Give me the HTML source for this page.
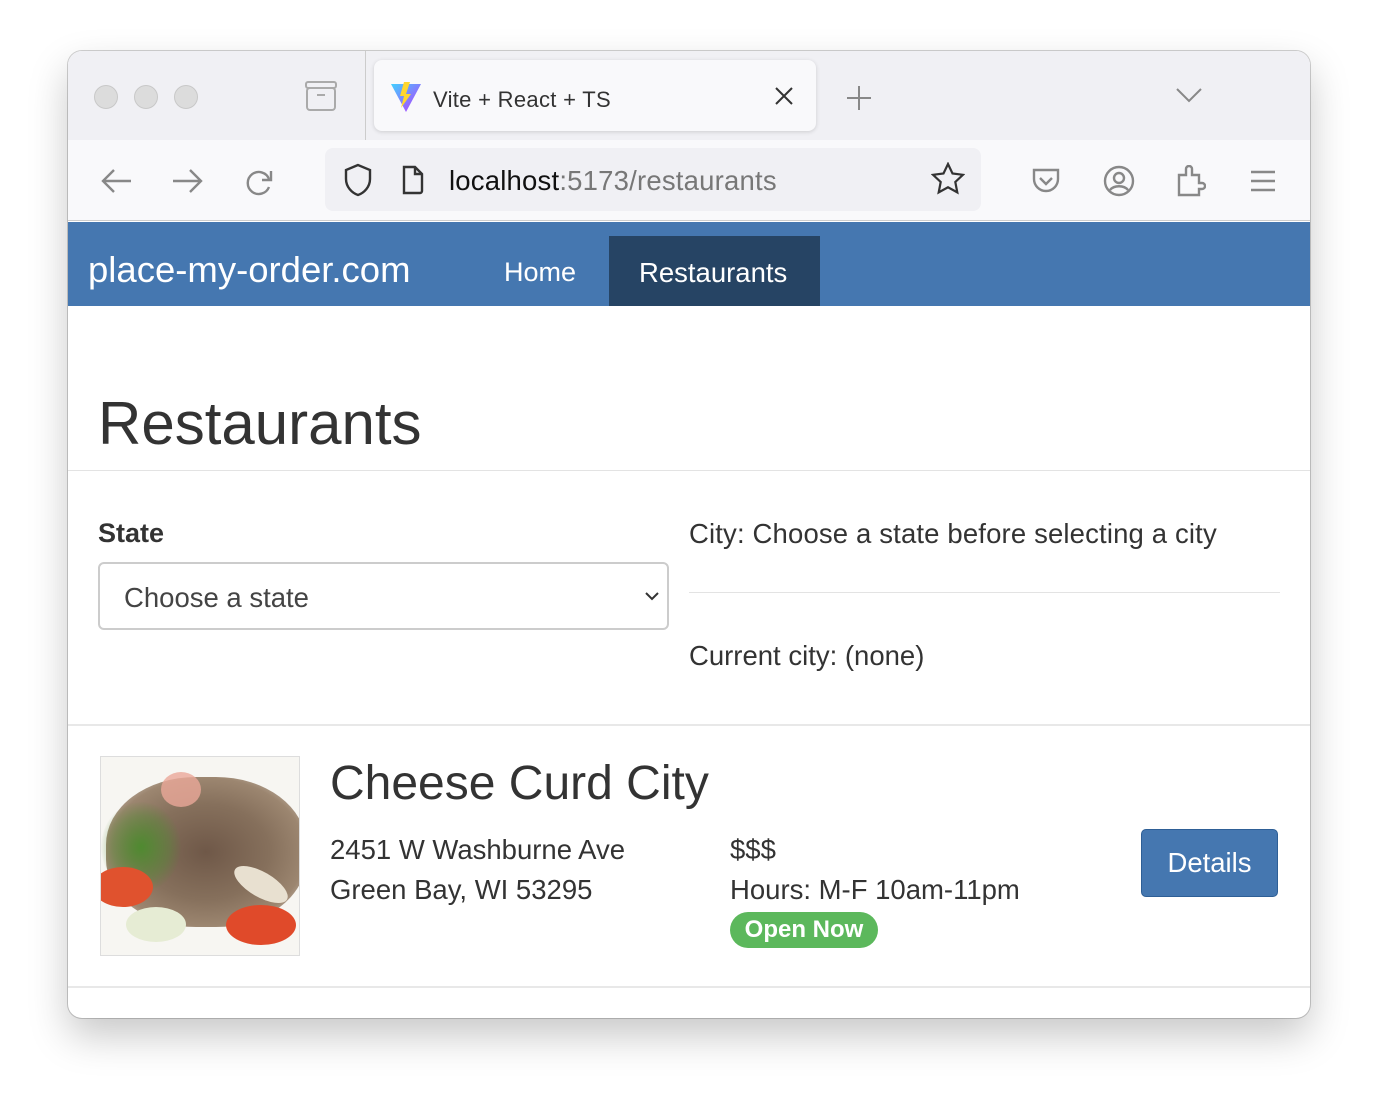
<!DOCTYPE html>
<html><head><meta charset="utf-8"><style>
*{margin:0;padding:0;box-sizing:border-box}
body{width:1378px;height:1102px;background:#fff;font-family:"Liberation Sans",Arial,sans-serif;position:relative;overflow:hidden}
.win{position:absolute;left:68px;top:51px;width:1242px;height:967px;border-radius:14px;overflow:hidden;background:#fff;box-shadow:0 18px 40px rgba(0,0,0,.22),0 0 0 1px rgba(0,0,0,.18)}
.tabs{position:absolute;left:0;top:0;width:100%;height:89px;background:#f0f0f4}
.dot{position:absolute;top:34px;width:24px;height:24px;border-radius:50%;background:#dcdcdc;border:1px solid #c8c8c8}
.tab{position:absolute;left:306px;top:9px;width:442px;height:71px;background:#f9f9fb;border-radius:8px;box-shadow:0 1px 4px rgba(0,0,0,.15)}
.tb{position:absolute;left:0;top:89px;width:100%;height:81px;background:#f9f9fb;border-bottom:1px solid #ccc}
.url{position:absolute;left:257px;top:8px;width:656px;height:63px;background:#f0f0f4;border-radius:8px}
.nav{position:absolute;left:0;top:171px;width:100%;height:84px;background:#4577b0}
.abs{position:absolute}
.t{color:#333}
</style></head><body>
<div class="win">
 <div class="tabs">
  <div class="dot" style="left:26px"></div><div class="dot" style="left:66px"></div><div class="dot" style="left:106px"></div>
  <svg class="abs" style="left:236px;top:28px" width="34" height="34" viewBox="0 0 34 34" fill="none" stroke="#aaa" stroke-width="2"><rect x="2" y="3" width="30" height="6" rx="2"/><rect x="3" y="9" width="28" height="22" rx="3"/><path d="M13 16h8"/></svg>
  <div class="abs" style="left:297px;top:0;width:1px;height:89px;background:#ccc"></div>
  <div class="tab">
   <svg class="abs" style="left:15px;top:20px" width="34" height="34" viewBox="0 0 34 34"><defs><linearGradient id="g" x1="0" y1="0" x2="1" y2="1"><stop offset="0" stop-color="#41d1ff"/><stop offset="1" stop-color="#bd34fe"/></linearGradient></defs><path d="M2 4 L32 4 L17 32Z" fill="url(#g)"/><path d="M15 2 L21 2 L17 14 L22 14 L12 28 L15 16 L11 16Z" fill="#ffd62e"/></svg>
   <div class="abs" style="left:59px;top:27px;font-size:22px;color:#333;letter-spacing:.3px">Vite + React + TS</div>
   <svg class="abs" style="left:400px;top:26px" width="20" height="20" stroke="#333" stroke-width="2"><path d="M2 2L18 18M18 2L2 18"/></svg>
  </div>
  <svg class="abs" style="left:778px;top:34px" width="26" height="26" stroke="#888" stroke-width="2"><path d="M13 1v24M1 13h24"/></svg>
  <svg class="abs" style="left:1108px;top:36px" width="26" height="16" fill="none" stroke="#888" stroke-width="2"><path d="M1 2l12 12 12-12"/></svg>
 </div>
 <div class="tb">
  <svg class="abs" style="left:32px;top:28px" width="32" height="26" fill="none" stroke="#888" stroke-width="2.4"><path d="M31 13H3M14 2L3 13l11 11"/></svg>
  <svg class="abs" style="left:104px;top:28px" width="32" height="26" fill="none" stroke="#888" stroke-width="2.4"><path d="M1 13h28M18 2l11 11-11 11"/></svg>
  <svg class="abs" style="left:176px;top:27px" width="30" height="30" fill="none" stroke="#888" stroke-width="2.4"><path d="M25 12A11 11 0 1 0 25 20"/><path d="M27 4v9h-9" /></svg>
  <div class="url">
   <svg class="abs" style="left:18px;top:15px" width="30" height="34" fill="none" stroke="#333" stroke-width="2.4"><path d="M15 2L3 7v9c0 8 6 14 12 16 6-2 12-8 12-16V7z"/></svg>
   <svg class="abs" style="left:76px;top:17px" width="24" height="30" fill="none" stroke="#333" stroke-width="2.4"><path d="M3 2h11l7 7v17a2 2 0 0 1-2 2H3z"/><path d="M14 2v7h7"/></svg>
   <div class="abs" style="left:124px;top:17px;font-size:27.5px;color:#111;letter-spacing:.2px">localhost<span style="color:#777">:5173/restaurants</span></div>
   <svg class="abs" style="left:606px;top:14px" width="34" height="34" fill="none" stroke="#333" stroke-width="2.2"><path d="M17 2l4.5 9.5 10.5 1.3-7.7 7.2 2 10.4L17 25.3 7.7 30.4l2-10.4L2 12.8l10.5-1.3z"/></svg>
  </div>
  <svg class="abs" style="left:963px;top:26px" width="30" height="30" fill="none" stroke="#888" stroke-width="2.4"><path d="M3 4h24v9a12 12 0 0 1-24 0z"/><path d="M9 12l6 6 6-6"/></svg>
  <svg class="abs" style="left:1035px;top:25px" width="32" height="32" fill="none" stroke="#888" stroke-width="2.4"><circle cx="16" cy="16" r="14"/><circle cx="16" cy="13" r="5"/><path d="M7 25c4-5 14-5 18 0"/></svg>
  <svg class="abs" style="left:1108px;top:25px" width="30" height="32" fill="none" stroke="#888" stroke-width="2.4"><path d="M3 10h7V4a3 3 0 0 1 6 0v6h7v8h3a3 3 0 0 1 0 6h-3v6H3z"/></svg>
  <svg class="abs" style="left:1182px;top:30px" width="26" height="22" stroke="#888" stroke-width="2.4"><path d="M1 2h24M1 11h24M1 20h24"/></svg>
 </div>
 <div class="nav">
  <div class="abs" style="left:20px;top:27px;font-size:36.5px;color:#fff">place-my-order.com</div>
  <div class="abs" style="left:436px;top:35px;font-size:27px;color:#fff">Home</div>
  <div class="abs" style="left:541px;top:14px;width:211px;height:70px;background:#264464"></div>
  <div class="abs" style="left:571px;top:35px;font-size:27.5px;color:#fff">Restaurants</div>
 </div>
 <div class="abs t" style="left:30px;top:338px;font-size:60px">Restaurants</div>
 <div class="abs" style="left:0;top:419px;width:100%;height:1px;background:#e3e3e3"></div>
 <div class="abs t" style="left:30px;top:467px;font-size:27px;font-weight:bold">State</div>
 <div class="abs" style="left:30px;top:511px;width:571px;height:68px;border:2px solid #ccc;border-radius:6px"></div>
 <div class="abs" style="left:56px;top:531px;font-size:27.5px;color:#444">Choose a state</div>
 <svg class="abs" style="left:577px;top:540px" width="14" height="10" fill="none" stroke="#333" stroke-width="2"><path d="M1 2l6 6 6-6"/></svg>
 <div class="abs t" style="left:621px;top:467px;font-size:27.5px;letter-spacing:.15px">City: Choose a state before selecting a city</div>
 <div class="abs" style="left:621px;top:541px;width:591px;height:1px;background:#e3e3e3"></div>
 <div class="abs t" style="left:621px;top:589px;font-size:27.5px">Current city: (none)</div>
 <div class="abs" style="left:0;top:673px;width:100%;height:2px;background:#e8e8e8"></div>
 <div class="abs" style="left:32px;top:705px;width:200px;height:200px;border:1px solid #ddd;background:#f7f6f2;overflow:hidden">
  <div class="abs" style="left:5px;top:20px;width:200px;height:150px;border-radius:45%;background:radial-gradient(ellipse,#6f5848 0%,#86705c 45%,#9c8670 70%,rgba(220,210,195,0) 100%)"></div>
  <div class="abs" style="left:0;top:45px;width:80px;height:90px;border-radius:50%;background:radial-gradient(#4f8a30,rgba(80,140,50,.4) 50%,rgba(80,140,50,0) 72%)"></div>
  <div class="abs" style="left:-8px;top:110px;width:60px;height:40px;border-radius:50%;background:#e0522e"></div>
  <div class="abs" style="left:125px;top:148px;width:70px;height:40px;border-radius:50%;background:#e04a2a"></div>
  <div class="abs" style="left:25px;top:150px;width:60px;height:35px;border-radius:50%;background:#e6ecd4"></div>
  <div class="abs" style="left:60px;top:15px;width:40px;height:35px;border-radius:50%;background:#eaa898;opacity:.8"></div>
  <div class="abs" style="left:130px;top:115px;width:60px;height:25px;border-radius:50%;background:#e8e0d0;transform:rotate(30deg)"></div>
 </div>
 <div class="abs t" style="left:262px;top:705px;font-size:48px">Cheese Curd City</div>
 <div class="abs t" style="left:262px;top:779px;font-size:27.5px;line-height:40px">2451 W Washburne Ave<br>Green Bay, WI 53295</div>
 <div class="abs t" style="left:662px;top:779px;font-size:27.5px;line-height:40px">$$$<br>Hours: M-F 10am-11pm</div>
 <div class="abs" style="left:662px;top:861px;width:148px;height:36px;border-radius:18px;background:#5cb85c;color:#fff;font-weight:bold;font-size:24px;text-align:center;line-height:36px">Open Now</div>
 <div class="abs" style="left:1073px;top:778px;width:137px;height:68px;background:#4577b0;border:1px solid #2e5f96;border-radius:5px;color:#fff;font-size:27.5px;text-align:center;line-height:66px">Details</div>
 <div class="abs" style="left:0;top:935px;width:100%;height:2px;background:#e8e8e8"></div>
</div>
</body></html>
